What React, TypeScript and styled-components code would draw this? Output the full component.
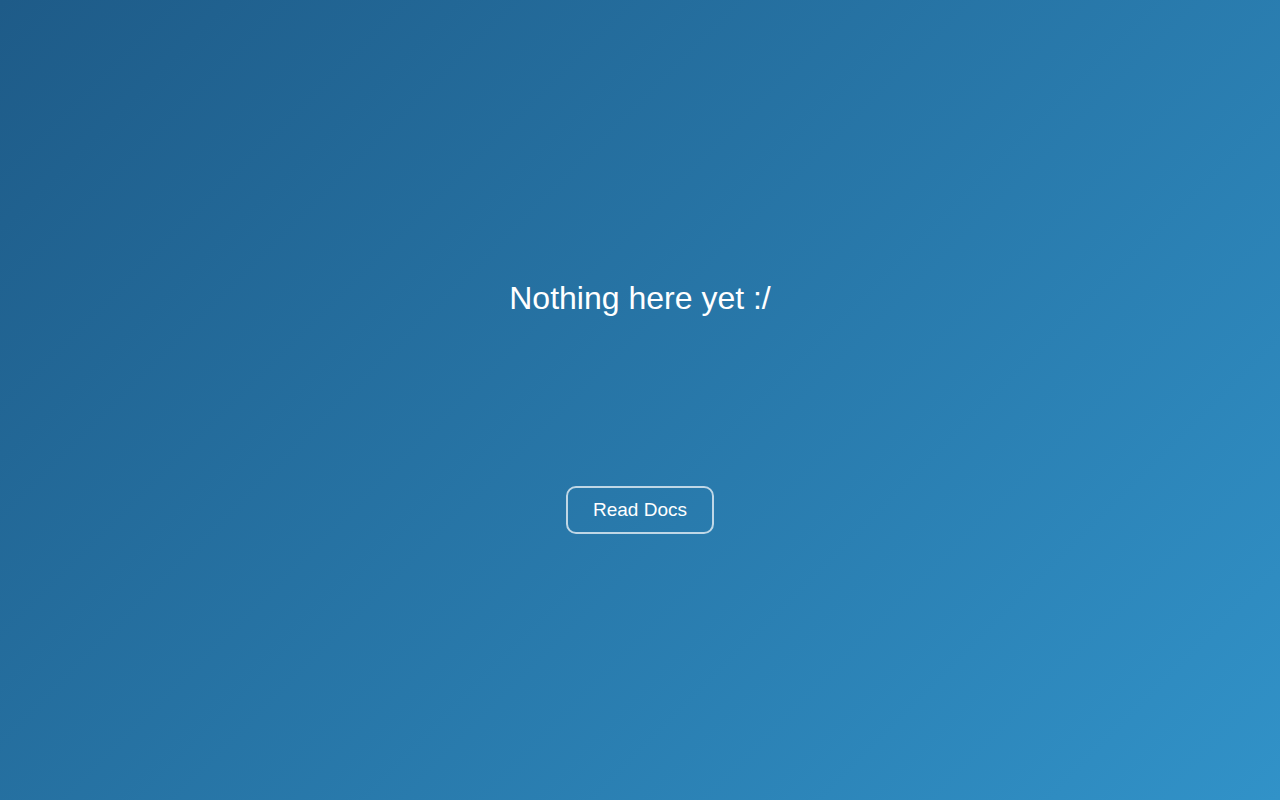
import React from "react";
import styled, { createGlobalStyle } from "styled-components";

const Global = createGlobalStyle`
  html, body { margin: 0; padding: 0; height: 100%; }
  body { font-family: "Liberation Sans", Arial, sans-serif; }
  #root { height: 100%; }
`;

const Page = styled.main`
  height: 800px;
  display: flex;
  flex-direction: column;
  align-items: center;
  justify-content: center;
  background: linear-gradient(135deg, #1e5b88 0%, #3192c8 100%);
  color: #fff;
  padding-top: 14px;
  box-sizing: border-box;
`;

const Title = styled.h1`
  margin: 0;
  font-size: 32px;
  font-weight: 400;
  line-height: 37px;
`;

const Button = styled.button`
  margin-top: 169px;
  width: 148px;
  height: 48px;
  border: 2px solid rgba(255, 255, 255, 0.7);
  border-radius: 10px;
  background: transparent;
  color: #fff;
  font-family: "Liberation Sans", Arial, sans-serif;
  font-size: 19px;
  cursor: pointer;
`;

export default function App() {
  return (
    <>
      <Global />
      <Page>
        <Title>Nothing here yet :/</Title>
        <Button>Read Docs</Button>
      </Page>
    </>
  );
}
